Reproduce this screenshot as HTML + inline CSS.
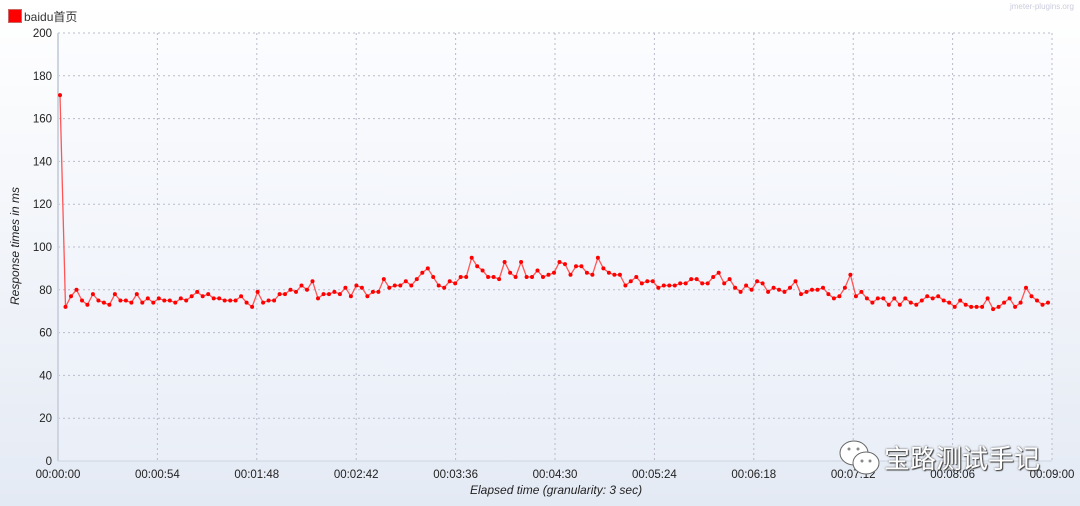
<!DOCTYPE html>
<html><head><meta charset="utf-8"><style>
body{margin:0;width:1080px;height:506px;overflow:hidden;background:linear-gradient(#ffffff,#e4eaf4);font-family:"Liberation Sans","Noto Sans CJK SC",sans-serif;position:relative}
.t{position:absolute;font-size:12px;color:#222}
</style></head><body>
<div style="position:absolute;left:8px;top:9px;width:12px;height:12px;background:#f00;border:1px solid #c66"></div>
<div class="t" style="left:24px;top:8px;font-size:12px;color:#333">baidu首页</div>
<div class="t" style="right:6px;top:2px;font-size:8px;color:#ccd">jmeter-plugins.org</div>
<svg id="s" width="1080" height="506" style="position:absolute;left:0;top:0"></svg>
<div class="t" style="left:8px;top:130px;transform:rotate(-90deg);transform-origin:0 0;top:305px;font-style:italic;font-size:12px">Response times in ms</div>
<div class="t" style="left:470px;top:483px;font-style:italic">Elapsed time (granularity: 3 sec)</div>
<svg width="46" height="40" style="position:absolute;left:838px;top:438px">
<ellipse cx="16" cy="15" rx="14" ry="12" fill="#fff" stroke="#666" stroke-width="1"/>
<ellipse cx="28" cy="25" rx="13" ry="11" fill="#fff" stroke="#666" stroke-width="1"/>
<circle cx="11" cy="11" r="1.5" fill="#888"/><circle cx="20" cy="11" r="1.5" fill="#888"/>
<circle cx="24" cy="23" r="1.5" fill="#888"/><circle cx="32" cy="23" r="1.5" fill="#888"/>
</svg>
<div style="position:absolute;left:884px;top:439px;color:#fff;font-size:26px;text-shadow:0 0 2px #555,1px 1px 1px #333;font-family:'Noto Sans CJK SC',sans-serif">宝路测试手记</div>
<script>
var s=document.getElementById('s'),h='';
var L=58,R=1052,T=33,B=461;
h+='<rect x="'+L+'" y="'+T+'" width="'+(R-L)+'" height="'+(B-T)+'" fill="url(#g)"/><defs><linearGradient id="g" x1="0" y1="0" x2="0" y2="1"><stop offset="0" stop-color="#fbfcfe"/><stop offset="1" stop-color="#eaeff8"/></linearGradient></defs>';
for(var i=0;i<=10;i++){var y=B-i*(B-T)/10;h+='<line x1="'+L+'" x2="'+R+'" y1="'+y+'" y2="'+y+'" stroke="#bbc" stroke-dasharray="2,3"/>';h+='<text x="'+(L-6)+'" y="'+(y+4)+'" text-anchor="end" font-size="11.5" fill="#222" font-family="Liberation Sans">'+(i*20)+'</text>';}
var lab=['00:00:00','00:00:54','00:01:48','00:02:42','00:03:36','00:04:30','00:05:24','00:06:18','00:07:12','00:08:06','00:09:00'];
for(var i=0;i<=10;i++){var x=L+i*(R-L)/10;h+='<line x1="'+x+'" x2="'+x+'" y1="'+T+'" y2="'+B+'" stroke="#bbc" stroke-dasharray="2,3"/>';h+='<text x="'+x+'" y="'+(B+17)+'" text-anchor="middle" font-size="11.5" fill="#222" font-family="Liberation Sans">'+lab[i]+'</text>';}
h+='<line x1="'+L+'" x2="'+L+'" y1="'+T+'" y2="'+B+'" stroke="#cfd5e0" stroke-width="2"/><line x1="'+L+'" x2="'+R+'" y1="'+B+'" y2="'+B+'" stroke="#cfd5e0"/>';
var d=[171,72,77,80,75,73,78,75,74,73,78,75,75,74,78,74,76,74,76,75,75,74,76,75,77,79,77,78,76,76,75,75,75,77,74,72,79,74,75,75,78,78,80,79,82,80,84,76,78,78,79,78,81,77,82,81,77,79,79,85,81,82,82,84,82,85,88,90,86,82,81,84,83,86,86,95,91,89,86,86,85,93,88,86,93,86,86,89,86,87,88,93,92,87,91,91,88,87,95,90,88,87,87,82,84,86,83,84,84,81,82,82,82,83,83,85,85,83,83,86,88,83,85,81,79,82,80,84,83,79,81,80,79,81,84,78,79,80,80,81,78,76,77,81,87,77,79,76,74,76,76,73,76,73,76,74,73,75,77,76,77,75,74,72,75,73,72,72,72,76,71,72,74,76,72,74,81,77,75,73,74];
var x0=60,x1=1048,pts=[],c='';
for(var i=0;i<d.length;i++){var x=x0+i*(x1-x0)/(d.length-1),y=B-d[i]*(B-T)/200;pts.push(x.toFixed(1)+','+y.toFixed(1));c+='<circle cx="'+x.toFixed(1)+'" cy="'+y.toFixed(1)+'" r="2" fill="#f00"/>';}
h+='<polyline points="'+pts.join(' ')+'" fill="none" stroke="#f55" stroke-width="1.3"/>'+c;
s.innerHTML=h;
</script>
</body></html>
